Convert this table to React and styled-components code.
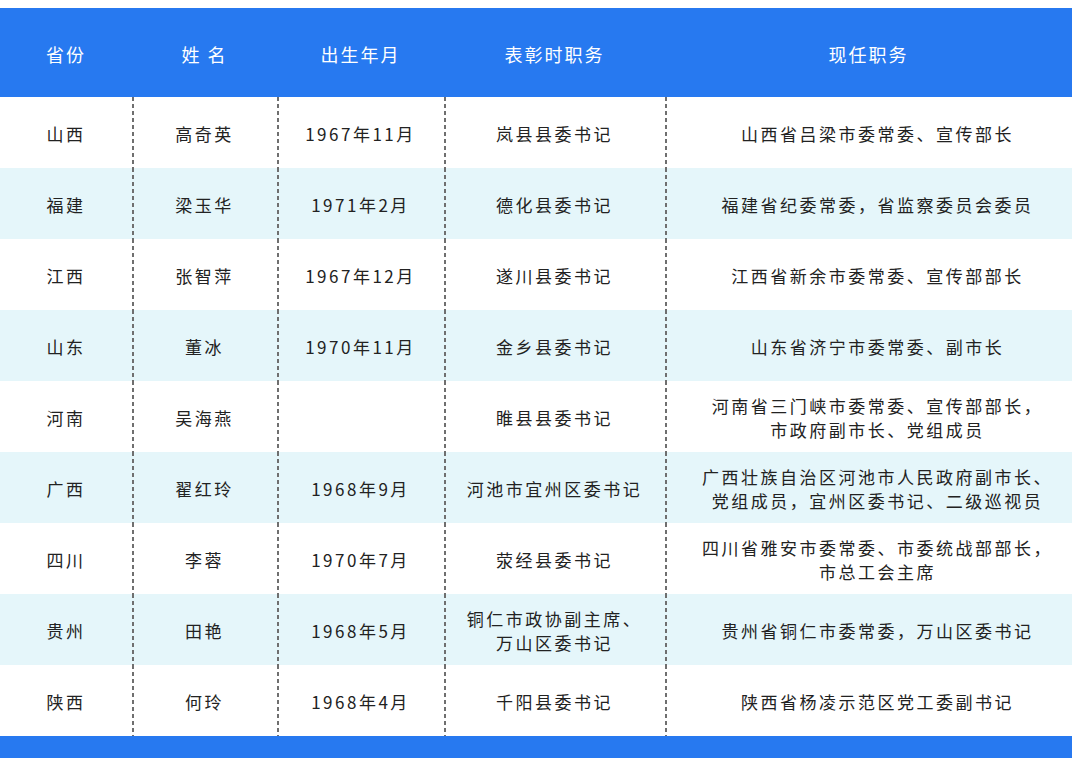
import React from 'react';
import styled, { createGlobalStyle } from 'styled-components';

const GlobalStyle = createGlobalStyle`
  html, body {
    margin: 0;
    padding: 0;
    background: #ffffff;
  }
  body {
    font-family: "Noto Sans CJK SC", "Noto Sans", sans-serif;
  }
`;

const columns = [
  { key: 'province', title: '省份', width: 132, shift: 0 },
  { key: 'name', title: '姓 名', width: 145, shift: 0 },
  { key: 'birth', title: '出生年月', width: 167, shift: 0 },
  { key: 'past', title: '表彰时职务', width: 221, shift: 0 },
  { key: 'now', title: '现任职务', width: 407, shift: 18 },
];

const rows = [
  { province: '山西', name: '高奇英', birth: '1967年11月', past: ['岚县县委书记'], now: ['山西省吕梁市委常委、宣传部长'] },
  { province: '福建', name: '梁玉华', birth: '1971年2月', past: ['德化县委书记'], now: ['福建省纪委常委，省监察委员会委员'] },
  { province: '江西', name: '张智萍', birth: '1967年12月', past: ['遂川县委书记'], now: ['江西省新余市委常委、宣传部部长'] },
  { province: '山东', name: '董冰', birth: '1970年11月', past: ['金乡县委书记'], now: ['山东省济宁市委常委、副市长'] },
  { province: '河南', name: '吴海燕', birth: '', past: ['睢县县委书记'], now: ['河南省三门峡市委常委、宣传部部长，', '市政府副市长、党组成员'] },
  { province: '广西', name: '翟红玲', birth: '1968年9月', past: ['河池市宜州区委书记'], now: ['广西壮族自治区河池市人民政府副市长、', '党组成员，宜州区委书记、二级巡视员'] },
  { province: '四川', name: '李蓉', birth: '1970年7月', past: ['荥经县委书记'], now: ['四川省雅安市委常委、市委统战部部长，', '市总工会主席'] },
  { province: '贵州', name: '田艳', birth: '1968年5月', past: ['铜仁市政协副主席、', '万山区委书记'], now: ['贵州省铜仁市委常委，万山区委书记'] },
  { province: '陕西', name: '何玲', birth: '1968年4月', past: ['千阳县委书记'], now: ['陕西省杨凌示范区党工委副书记'] },
];

const gridTemplate = columns.map((c) => `${c.width}px`).join(' ');

function App() {
  return (
    <>
      <GlobalStyle />
      <Page>
        <Table>
          <HeaderRow>
            {columns.map((c) => (
              <HeaderCell key={c.key}>{c.title}</HeaderCell>
            ))}
          </HeaderRow>
          {rows.map((row, i) => (
            <BodyRow key={row.province} $striped={i % 2 === 1}>
              {columns.map((c, j) => {
                const value = row[c.key];
                const lines = Array.isArray(value) ? value : [value];
                return (
                  <Cell key={c.key} $divider={j > 0} $shift={c.shift}>
                    <CellText>
                      {lines.map((line, k) => (
                        <Line key={k}>{line}</Line>
                      ))}
                    </CellText>
                  </Cell>
                );
              })}
            </BodyRow>
          ))}
          <FooterBar />
        </Table>
      </Page>
    </>
  );
}

export default App;

const Page = styled.div`
  width: 1080px;
  height: 760px;
  padding-top: 8px;
  box-sizing: border-box;
  overflow: hidden;
`;

const Table = styled.div`
  width: 1072px;
  display: flex;
  flex-direction: column;
`;

const HeaderRow = styled.div`
  display: grid;
  grid-template-columns: ${gridTemplate};
  height: 89px;
  background: #2779f0;
`;

const HeaderCell = styled.div`
  display: flex;
  align-items: center;
  justify-content: center;
  color: #ffffff;
  font-size: 18px;
  letter-spacing: 2px;
  white-space: pre;
  padding-top: 3px;
`;

const BodyRow = styled.div`
  display: grid;
  grid-template-columns: ${gridTemplate};
  height: 71px;
  background: ${(p) => (p.$striped ? '#e5f6fa' : '#ffffff')};
`;

const Cell = styled.div`
  display: flex;
  align-items: center;
  justify-content: center;
  text-align: center;
  color: #222222;
  padding-top: 2px;
  padding-left: ${(p) => p.$shift}px;
  background-image: ${(p) =>
    p.$divider ? 'linear-gradient(to bottom, #6f6f6f 0 4px, transparent 4px 7px)' : 'none'};
  background-size: 1.5px 7px;
  background-repeat: repeat-y;
  background-position: 0 0;
`;

const CellText = styled.div`
  display: flex;
  flex-direction: column;
  align-items: center;
  font-size: 17px;
  line-height: 24px;
  letter-spacing: 2.5px;
`;

const Line = styled.span`
  white-space: nowrap;
`;

const FooterBar = styled.div`
  height: 22px;
  background: #2779f0;
`;
